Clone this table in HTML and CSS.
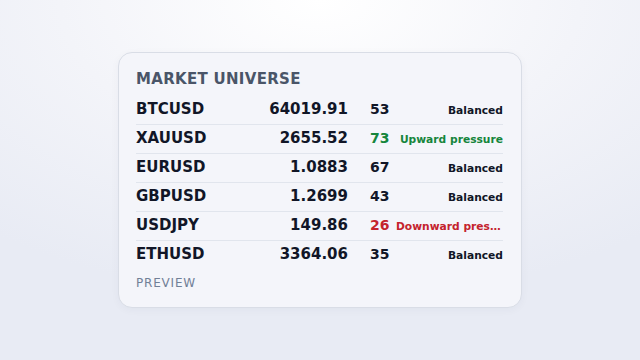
FILE: index.html
```html
<!DOCTYPE html>
<html>
<head>
<meta charset="utf-8">
<link rel="stylesheet" href="styles.css">
</head>
<body>
<div class="card">
  <div class="title">MARKET UNIVERSE</div>
  <div class="rows">
    <div class="row"><span class="sym">BTCUSD</span><span class="price">64019.91</span><span class="score">53</span><span class="status">Balanced</span></div>
    <div class="row"><span class="sym">XAUUSD</span><span class="price">2655.52</span><span class="score up">73</span><span class="status up">Upward pressure</span></div>
    <div class="row"><span class="sym">EURUSD</span><span class="price">1.0883</span><span class="score">67</span><span class="status">Balanced</span></div>
    <div class="row"><span class="sym">GBPUSD</span><span class="price">1.2699</span><span class="score">43</span><span class="status">Balanced</span></div>
    <div class="row"><span class="sym">USDJPY</span><span class="price">149.86</span><span class="score down">26</span><span class="status down">Downward pressure</span></div>
    <div class="row"><span class="sym">ETHUSD</span><span class="price">3364.06</span><span class="score">35</span><span class="status">Balanced</span></div>
  </div>
  <div class="foot">PREVIEW</div>
</div>
</body>
</html>
```
FILE: styles.css
```css
html, body { margin: 0; padding: 0; }
body {
  width: 640px; height: 360px;
  font-family: "DejaVu Sans", sans-serif;
  background: radial-gradient(ellipse 520px 300px at 50% 0%, #ffffff 0%, #f3f4f9 50%, #e8ebf4 100%);
  display: flex; justify-content: center; align-items: flex-start;
  box-sizing: border-box;
  padding-top: 52px;
}
.card {
  width: 404px; box-sizing: border-box;
  background: #f4f5fa;
  border: 1px solid #d9dde6;
  border-radius: 14px;
  padding: 15px 18px 16px 17px;
  box-shadow: 0 2px 8px rgba(30, 40, 80, 0.04);
}
.title {
  font-size: 15px; font-weight: bold; color: #4a5568;
  letter-spacing: 0.3px;
  line-height: 22px; margin-bottom: 6px;
}
.row {
  display: grid;
  grid-template-columns: 1fr 110px 48px 107px;
  align-items: baseline;
  height: 24px;
  padding-top: 4px;
  border-bottom: 1px solid #e1e5ed;
  color: #111627;
  font-weight: bold;
  line-height: 18px;
}
.row:last-child { border-bottom-color: transparent; }
.sym { font-size: 15px; }
.price { font-size: 15px; text-align: right; }
.score { font-size: 14px; padding-left: 22px; }
.status {
  font-size: 10.7px; text-align: right;
  white-space: nowrap; overflow: hidden; text-overflow: ellipsis;
}
.up { color: #16853c; }
.down { color: #c4232d; }
.foot {
  margin-top: 5px;
  font-size: 12px; color: #718097; letter-spacing: 0.8px;
  line-height: 16px;
}
```
